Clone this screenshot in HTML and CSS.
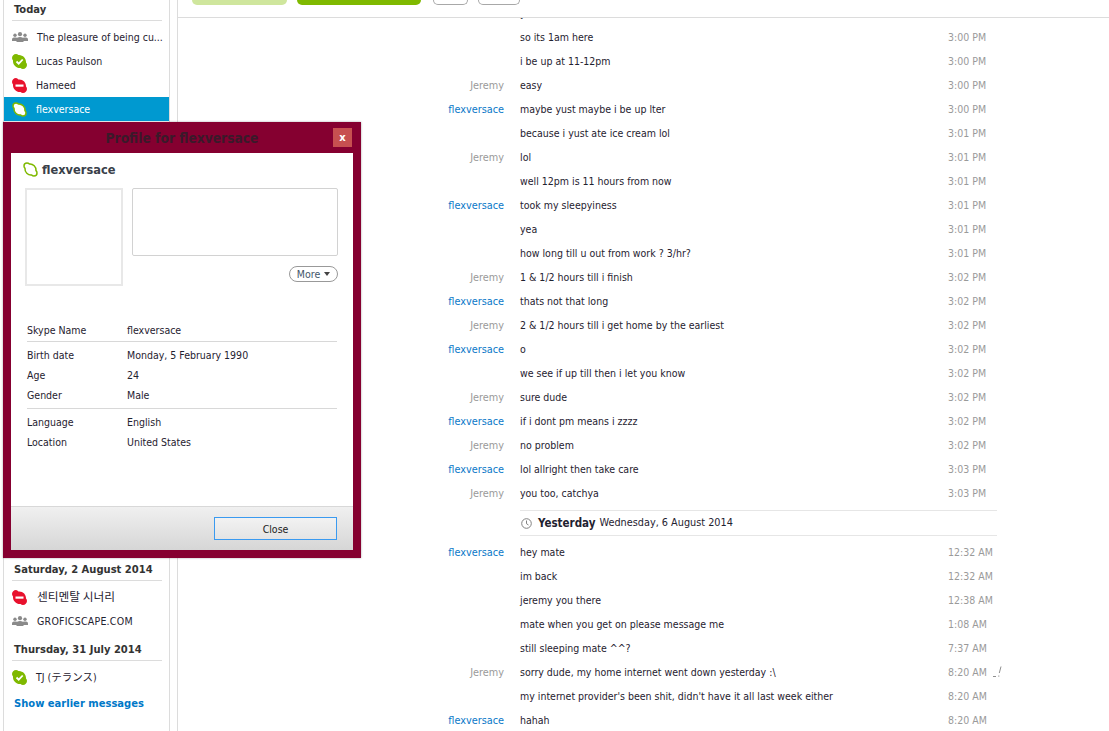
FILE: index.html
```html
<!DOCTYPE html>
<html lang="en">
<head>
<meta charset="utf-8">
<title>Skype</title>
<link rel="stylesheet" href="styles.css">
</head>
<body>
<svg class="defs" width="0" height="0" aria-hidden="true">
  <symbol id="blob" viewBox="0 0 15 15"><path d="M4 1C5 1 5.8 1.4 6.4 2 10 1.6 13.4 5 13 8.6 13.6 9.2 14 10 14 11 14 12.7 12.7 14 11 14 10 14 9.2 13.6 8.6 13 5 13.4 1.6 10 2 6.4 1.4 5.8 1 5 1 4 1 2.3 2.3 1 4 1Z"/></symbol>
  <symbol id="online" viewBox="0 0 15 15"><path fill="#7fb900" d="M4 0C5 0 5.8.4 6.4 1 10.600 .6 14.400 4.400 14 8.600 14.600 9.200 15 10 15 11 15 13.200 13.200 15 11 15 10 15 9.200 14.600 8.600 14 4.400 14.400 .6 10.600 1 6.400 .4 5.800 0 5 0 4 0 1.800 1.800 0 4 0Z"/><path fill="none" stroke="#fff" stroke-width="1.800" d="M4.500 7.500l2.200 2.200 4-4.200"/></symbol>
  <symbol id="busy" viewBox="0 0 15 15"><path fill="#e8112d" d="M4 0C5 0 5.800 .8 6.400 1.500 10.600 1 14.400 4.400 14 8.600 14.600 9.200 15 10 15 11 15 13.200 13.200 15 11 15 10 15 9.200 14.600 8.600 14 4.400 14.400 .6 10.600 1 6.400 .4 5.800 0 5 0 4 0 1.800 1.800 0 4 0Z"/><rect x="3.500" y="6.500" width="8" height="2.200" fill="#fff"/></symbol>
  <symbol id="group" viewBox="0 0 16 10"><g fill="#8a8a8a"><circle cx="3" cy="3.200" r="1.700"/><circle cx="13" cy="3.200" r="1.700"/><circle cx="8" cy="2.200" r="2.100"/><path d="M0 9V7.200C0 6 1.200 5.500 3 5.500S6 6 6 7.200V9Z"/><path d="M10 9V7.200C10 6 11.200 5.500 13 5.500S16 6 16 7.200V9Z"/><path d="M4.500 10V7.500C4.500 5.800 6 5 8 5S11.500 5.800 11.500 7.500V10Z"/></g></symbol>
</svg>

<aside class="sidebar">
  <h3 class="day day-first">Today</h3>
  <div class="conv"><svg class="ic ic-group"><use href="#group"/></svg><span class="conv-name">The pleasure of being cu...</span></div>
  <div class="conv"><svg class="ic"><use href="#online"/></svg><span class="conv-name">Lucas Paulson</span></div>
  <div class="conv"><svg class="ic"><use href="#busy"/></svg><span class="conv-name">Hameed</span></div>
  <div class="conv conv-active"><svg class="ic ic-off"><use href="#blob"/></svg><span class="conv-name">flexversace</span></div>
  <div class="covered"></div>
  <h3 class="day">Saturday, 2 August 2014</h3>
  <div class="conv"><svg class="ic"><use href="#busy"/></svg><span class="conv-name conv-cjk">센티멘탈 시너리</span></div>
  <div class="conv"><svg class="ic ic-group"><use href="#group"/></svg><span class="conv-name conv-caps">GROFICSCAPE.COM</span></div>
  <h3 class="day">Thursday, 31 July 2014</h3>
  <div class="conv"><svg class="ic"><use href="#online"/></svg><span class="conv-name">TJ (テランス)</span></div>
  <a class="earlier">Show earlier messages</a>
</aside>

<main class="main">
  <header class="toolbar">
    <span class="pill pill-light"></span>
    <span class="pill pill-green"></span>
    <span class="pill pill-out pill-a"></span>
    <span class="pill pill-out pill-b"></span>
  </header>
  <section class="chat">
    <div class="msg msg-clipped"><span class="who"></span><span class="txt">y</span><span class="time"></span></div>
    <div class="msg"><span class="who"></span><span class="txt">so its 1am here</span><span class="time">3:00 PM</span></div>
    <div class="msg"><span class="who"></span><span class="txt">i be up at 11-12pm</span><span class="time">3:00 PM</span></div>
    <div class="msg"><span class="who">Jeremy</span><span class="txt">easy</span><span class="time">3:00 PM</span></div>
    <div class="msg"><span class="who me">flexversace</span><span class="txt">maybe yust maybe i be up lter</span><span class="time">3:00 PM</span></div>
    <div class="msg"><span class="who"></span><span class="txt">because i yust ate ice cream lol</span><span class="time">3:01 PM</span></div>
    <div class="msg"><span class="who">Jeremy</span><span class="txt">lol</span><span class="time">3:01 PM</span></div>
    <div class="msg"><span class="who"></span><span class="txt">well 12pm is 11 hours from now</span><span class="time">3:01 PM</span></div>
    <div class="msg"><span class="who me">flexversace</span><span class="txt">took my sleepyiness</span><span class="time">3:01 PM</span></div>
    <div class="msg"><span class="who"></span><span class="txt">yea</span><span class="time">3:01 PM</span></div>
    <div class="msg"><span class="who"></span><span class="txt">how long till u out from work ? 3/hr?</span><span class="time">3:01 PM</span></div>
    <div class="msg"><span class="who">Jeremy</span><span class="txt">1 &amp; 1/2 hours till i finish</span><span class="time">3:02 PM</span></div>
    <div class="msg"><span class="who me">flexversace</span><span class="txt">thats not that long</span><span class="time">3:02 PM</span></div>
    <div class="msg"><span class="who">Jeremy</span><span class="txt">2 &amp; 1/2 hours till i get home by the earliest</span><span class="time">3:02 PM</span></div>
    <div class="msg"><span class="who me">flexversace</span><span class="txt">o</span><span class="time">3:02 PM</span></div>
    <div class="msg"><span class="who"></span><span class="txt">we see if up till then i let you know</span><span class="time">3:02 PM</span></div>
    <div class="msg"><span class="who">Jeremy</span><span class="txt">sure dude</span><span class="time">3:02 PM</span></div>
    <div class="msg"><span class="who me">flexversace</span><span class="txt">if i dont pm means i zzzz</span><span class="time">3:02 PM</span></div>
    <div class="msg"><span class="who">Jeremy</span><span class="txt">no problem</span><span class="time">3:02 PM</span></div>
    <div class="msg"><span class="who me">flexversace</span><span class="txt">lol allright then take care</span><span class="time">3:03 PM</span></div>
    <div class="msg"><span class="who">Jeremy</span><span class="txt">you too, catchya</span><span class="time">3:03 PM</span></div>
    <div class="date-sep">
      <svg class="clock" viewBox="0 0 11 11"><circle cx="5.500" cy="5.500" r="4.800"/><path d="M5.500 2.500v3.200l2 1.300"/></svg>
      <b>Yesterday</b> Wednesday, 6 August 2014
    </div>
    <div class="msg"><span class="who me">flexversace</span><span class="txt">hey mate</span><span class="time">12:32 AM</span></div>
    <div class="msg"><span class="who"></span><span class="txt">im back</span><span class="time">12:32 AM</span></div>
    <div class="msg"><span class="who"></span><span class="txt">jeremy you there</span><span class="time">12:38 AM</span></div>
    <div class="msg"><span class="who"></span><span class="txt">mate when you get on please message me</span><span class="time">1:08 AM</span></div>
    <div class="msg"><span class="who"></span><span class="txt">still sleeping mate ^^?</span><span class="time">7:37 AM</span></div>
    <div class="msg"><span class="who">Jeremy</span><span class="txt">sorry dude, my home internet went down yesterday :\</span><span class="time">8:20 AM<svg class="edited" viewBox="0 0 9 12"><path d="M0 10.500h3M8 .5L6.300 7M5.800 9.500v1.200"/></svg></span></div>
    <div class="msg"><span class="who"></span><span class="txt">my internet provider's been shit, didn't have it all last week either</span><span class="time">8:20 AM</span></div>
    <div class="msg"><span class="who me">flexversace</span><span class="txt">hahah</span><span class="time">8:20 AM</span></div>
  </section>
</main>

<div class="dialog">
  <div class="dlg-title">
    <span></span>
    <span class="dlg-caption">Profile for flexversace</span>
    <button class="dlg-x">x</button>
  </div>
  <div class="dlg-body">
    <div class="dlg-main">
      <div class="dlg-name"><svg class="ic ic-off"><use href="#blob"/></svg><span class="dlg-name-text">flexversace</span></div>
      <div class="dlg-top">
        <div class="avatar"></div>
        <div class="mood-col">
          <div class="mood"></div>
          <button class="more">More <i class="caret"></i></button>
        </div>
      </div>
      <div class="info">
        <div class="info-row"><span class="info-k">Skype Name</span><span>flexversace</span></div>
        <div class="info-group">
          <div class="info-row"><span class="info-k">Birth date</span><span>Monday, 5 February 1990</span></div>
          <div class="info-row"><span class="info-k">Age</span><span>24</span></div>
          <div class="info-row"><span class="info-k">Gender</span><span>Male</span></div>
        </div>
        <div class="info-group">
          <div class="info-row"><span class="info-k">Language</span><span>English</span></div>
          <div class="info-row"><span class="info-k">Location</span><span>United States</span></div>
        </div>
      </div>
    </div>
    <div class="dlg-foot"><button class="close">Close</button></div>
  </div>
</div>
</body>
</html>
```
FILE: styles.css
```css
* { box-sizing: border-box; }
html, body { height: 100%; }
body {
  margin: 0;
  display: flex;
  overflow: hidden;
  position: relative;
  background: #fff;
  color: #1f2230;
  font: 10.500px/24px "DejaVu Sans Condensed", "DejaVu Sans", "Noto Sans CJK JP", sans-serif;
  font-stretch: condensed;
}
.defs { position: absolute; }

/* sidebar */
.sidebar {
  flex: none;
  width: 167px;
  margin-left: 3px;
  border-left: 1px solid #dcdcdc;
  border-right: 1px solid #dcdcdc;
}
.day {
  margin: 8px 7px 4px 8px;
  padding: 1px 0 2px 2px;
  border-bottom: 1px solid #dcdcdc;
  font-size: 11.100px;
  font-weight: bold;
  line-height: 16px;
  color: #333;
  white-space: nowrap;
}
.day-first { margin-top: 1px; }
.conv {
  display: flex;
  align-items: center;
  height: 24px;
  padding-left: 8px;
  white-space: nowrap;
}
.conv-active { background: #0099d0; color: #fff; }
.conv-name { margin-left: 9px; }
.conv-cjk { margin: 0 0 2px 10px; font-family: "Noto Sans CJK KR", sans-serif; font-size: 11.700px; }
.conv-caps { letter-spacing: .25px; }
.ic { flex: none; width: 15px; height: 15px; }
.ic-group { width: 16px; height: 10px; }
.ic-off { fill: #fff; stroke: #7fb900; stroke-width: 1.500; }
.covered { height: 432px; }
.earlier {
  display: block;
  margin: 3px 0 0 10px;
  color: #0078c8;
  font-size: 11.100px;
  font-weight: bold;
  white-space: nowrap;
}

/* main column */
.main {
  flex: 1;
  min-width: 0;
  margin-left: 7px;
  border-left: 1px solid #dcdcdc;
  display: flex;
  flex-direction: column;
}
.toolbar {
  flex: none;
  height: 18px;
  border-bottom: 1px solid #dcdcdc;
  display: flex;
  align-items: flex-start;
  padding-left: 14px;
  gap: 10px;
}
.pill { display: block; height: 5px; border-radius: 0 0 14px 14px; }
.pill-light { width: 95px; background: #cfe69d; }
.pill-green { width: 124px; background: #7fb900; }
.pill-out { border: 1px solid #a8a8a8; border-top: 0; border-radius: 0 0 12px 12px; }
.pill-a { width: 35px; margin-left: 2px; }
.pill-b { width: 42px; }

.chat { flex: 1; min-height: 0; overflow: hidden; }
.msg {
  display: grid;
  grid-template-columns: 326px 444px auto;
  align-items: baseline;
  height: 24px;
  white-space: nowrap;
}
.msg-clipped { margin-top: -17px; }
.who { color: #9a9a9a; text-align: right; font-size: 10.800px; }
.who.me { color: #0a78c8; }
.txt { padding-left: 16px; }
.time { color: #9a9a9a; position: relative; }
.edited {
  position: absolute;
  left: 45px;
  top: 6px;
  width: 9px;
  height: 12px;
  fill: none;
  stroke: #8f8f8f;
  stroke-width: 1;
}
.date-sep {
  display: flex;
  align-items: center;
  gap: 4px;
  width: 477px;
  height: 26px;
  margin: 5px 0 4px 342px;
  border-top: 1px solid #e6e6e6;
  border-bottom: 1px solid #e6e6e6;
  font-size: 10.800px;
  white-space: nowrap;
}
.date-sep b { margin-left: 2px; font-size: 11.500px; }
.clock {
  width: 11px;
  height: 11px;
  margin-left: 1px;
  fill: none;
  stroke: #808080;
  stroke-width: 1;
}

/* profile dialog */
.dialog {
  position: absolute;
  left: 3px;
  top: 122px;
  width: 358px;
  height: 436px;
  padding: 0 8px 8px;
  background: #850030;
  box-shadow: 0 0 2px rgba(0, 0, 0, .35);
  display: flex;
  flex-direction: column;
}
.dlg-title {
  flex: none;
  height: 31px;
  display: grid;
  grid-template-columns: 1fr auto 1fr;
}
.dlg-caption {
  padding-top: 1px;
  font-size: 13.700px;
  font-weight: bold;
  line-height: 31px;
  color: #3a1a2a;
  white-space: nowrap;
}
.dlg-x {
  justify-self: end;
  width: 19px;
  height: 19px;
  margin: 6px 1px 0 0;
  padding: 0;
  border: 0;
  background: #c75050;
  color: #fff;
  font: bold 10px/18px "DejaVu Sans", sans-serif;
}
.dlg-body { flex: 1; min-height: 0; display: flex; flex-direction: column; background: #fff; }
.dlg-main { flex: 1; min-height: 0; }
.dlg-name {
  display: flex;
  align-items: center;
  gap: 4px;
  height: 16px;
  margin: 8px 0 0 12px;
  font-size: 12.700px;
  font-weight: bold;
  color: #3a3f4a;
}
.dlg-name-text { padding-top: 2px; }
.dlg-top { display: flex; gap: 9px; margin: 11px 15px 0 14px; }
.avatar { flex: none; width: 98px; height: 98px; border: 2px solid #e8e8e8; }
.mood-col { flex: 1; display: flex; flex-direction: column; align-items: flex-end; }
.mood { align-self: stretch; height: 68px; border: 1px solid #d2d2d2; border-radius: 2px; }
.more {
  display: flex;
  align-items: center;
  justify-content: center;
  gap: 4px;
  width: 49px;
  height: 16px;
  margin-top: 10px;
  padding: 0;
  border: 1px solid #999;
  border-radius: 8px;
  background: #fff;
  color: #44566a;
  font: inherit;
  font-stretch: condensed;
  line-height: 14px;
}
.caret { width: 0; height: 0; border: 3.500px solid transparent; border-top: 4px solid #444; border-bottom: 0; }
.info { margin: 34px 16px 0; }
.info-row { display: flex; height: 20px; line-height: 20px; white-space: nowrap; }
.info-k { flex: none; width: 100px; }
.info-group { margin-top: 1px; padding-top: 3px; border-top: 1px solid #d8d8d8; }
.info-group + .info-group { margin-top: 3px; }
.dlg-foot {
  flex: none;
  height: 44px;
  display: flex;
  justify-content: flex-end;
  align-items: flex-start;
  padding: 10px 16px 0 0;
  border-top: 1px solid #d8d8d8;
  background: linear-gradient(#f0f0f0, #d6d6d6);
}
.close {
  width: 123px;
  height: 23px;
  padding: 1px 0 0;
  border: 1px solid #3a9af0;
  background: linear-gradient(#f2f2f2, #e4e4e4);
  color: #222;
  font: inherit;
  font-stretch: condensed;
  line-height: 20px;
}
```
